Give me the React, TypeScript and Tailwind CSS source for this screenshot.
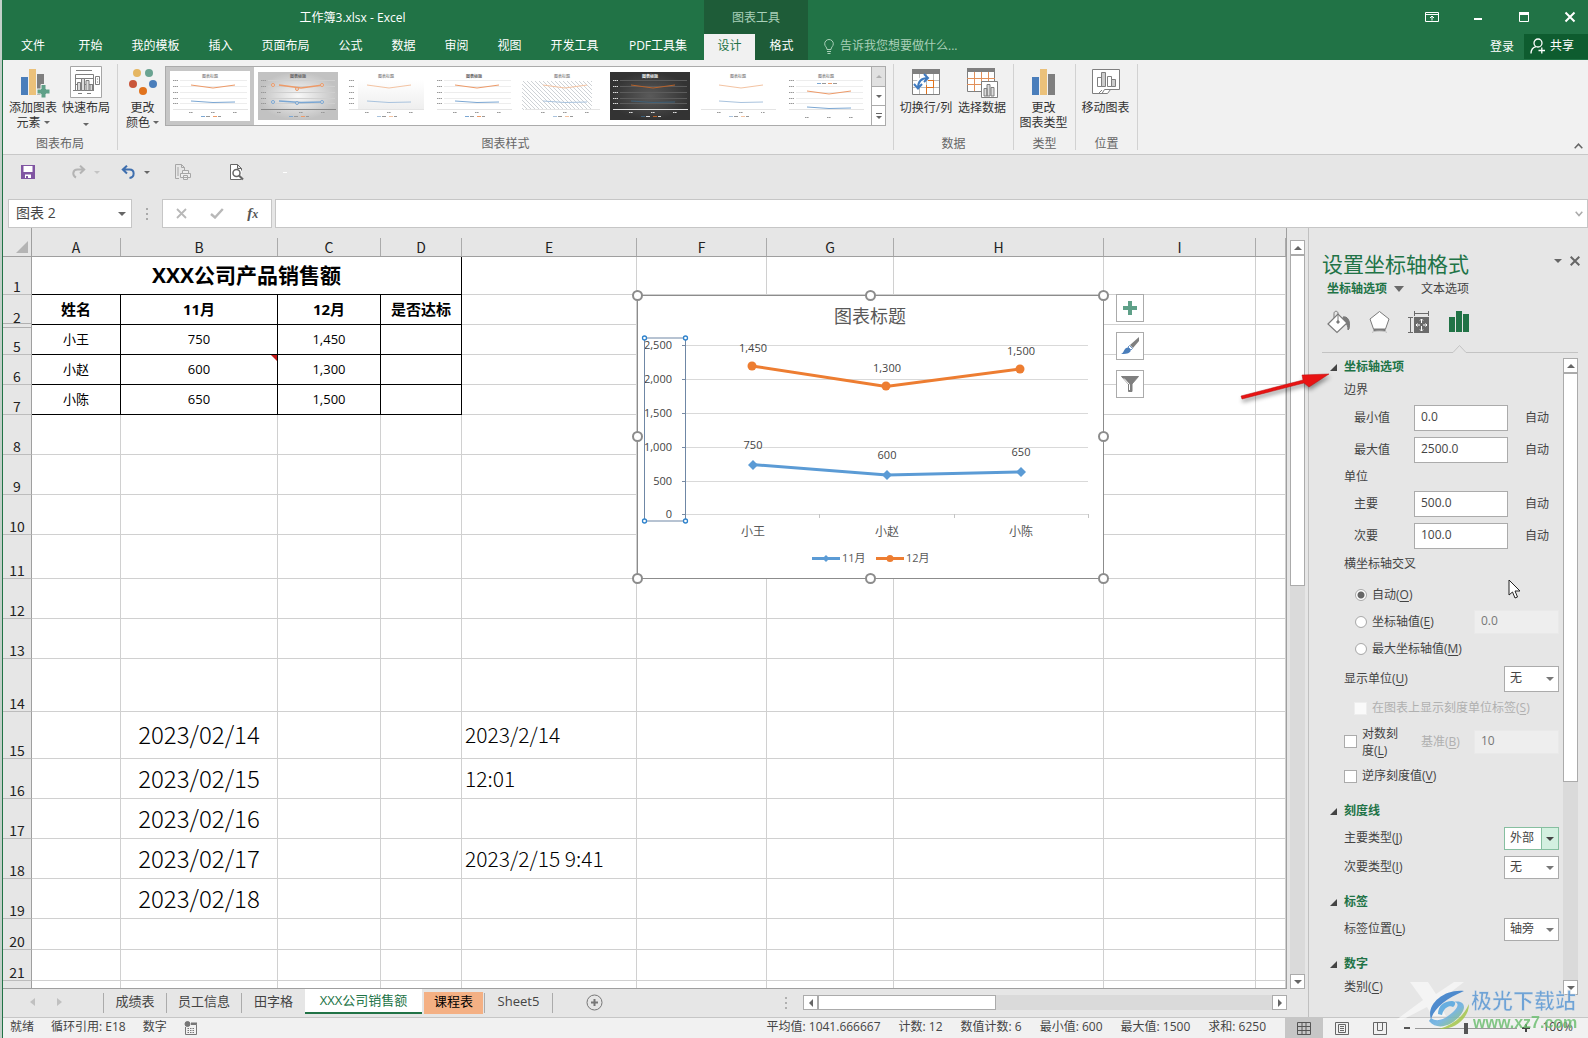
import type { ReactNode } from 'react'
import { clsx } from 'clsx'

const menuTabs = [
  { label: '文件', width: 'w-[62px]' },
  { label: '开始', width: 'w-[53px]' },
  { label: '我的模板', width: 'w-[77px]' },
  { label: '插入', width: 'w-[53px]' },
  { label: '页面布局', width: 'w-[77px]' },
  { label: '公式', width: 'w-[53px]' },
  { label: '数据', width: 'w-[53px]' },
  { label: '审阅', width: 'w-[53px]' },
  { label: '视图', width: 'w-[53px]' },
  { label: '开发工具', width: 'w-[77px]' },
  { label: 'PDF工具集', width: 'w-[90px]' },
]

const columns = [
  { name: 'A', width: 'w-[89px]' },
  { name: 'B', width: 'w-[157px]' },
  { name: 'C', width: 'w-[103px]' },
  { name: 'D', width: 'w-[81px]' },
  { name: 'E', width: 'w-[175px]' },
  { name: 'F', width: 'w-[130px]' },
  { name: 'G', width: 'w-[127px]' },
  { name: 'H', width: 'w-[210px]' },
  { name: 'I', width: 'w-[152px]' },
  { name: '', width: '' },
]

type Row = { n: string; height: string; cells?: string[]; kind?: 'title' | 'head' | 'data' | 'date' }

const rows: Row[] = [
  { n: '1', height: 'h-[38px]', cells: ['XXX公司产品销售额'], kind: 'title' },
  { n: '2', height: 'h-[30px]', cells: ['姓名', '11月', '12月', '是否达标'], kind: 'head' },
  { n: '5', height: 'h-[30px]', cells: ['小王', '750', '1,450', ''], kind: 'data' },
  { n: '6', height: 'h-[30px]', cells: ['小赵', '600', '1,300', ''], kind: 'data' },
  { n: '7', height: 'h-[30px]', cells: ['小陈', '650', '1,500', ''], kind: 'data' },
  { n: '8', height: 'h-[40px]' },
  { n: '9', height: 'h-[40px]' },
  { n: '10', height: 'h-[40px]' },
  { n: '11', height: 'h-[44px]' },
  { n: '12', height: 'h-[40px]' },
  { n: '13', height: 'h-[40px]' },
  { n: '14', height: 'h-[53px]' },
  { n: '15', height: 'h-[47px]', cells: ['', '2023/02/14', '', '', '2023/2/14'], kind: 'date' },
  { n: '16', height: 'h-[40px]', cells: ['', '2023/02/15', '', '', '12:01'], kind: 'date' },
  { n: '17', height: 'h-[40px]', cells: ['', '2023/02/16'], kind: 'date' },
  { n: '18', height: 'h-[40px]', cells: ['', '2023/02/17', '', '', '2023/2/15 9:41'], kind: 'date' },
  { n: '19', height: 'h-[40px]', cells: ['', '2023/02/18'], kind: 'date' },
  { n: '20', height: 'h-[31px]' },
  { n: '21', height: 'h-[31px]' },
  { n: '', height: 'h-[31px]' },
]

function Caret({ className = 'text-[#666]' }: { className?: string }) {
  return (
    <svg width="8" height="4" viewBox="0 0 8 4" className={clsx('shrink-0', className)}>
      <path d="M0 0h8L4 4z" fill="currentColor" />
    </svg>
  )
}

function LargeCaret() {
  return (
    <svg width="10" height="6" viewBox="0 0 10 6">
      <path d="M0 0h10L5 6z" fill="#6a6a6a" />
    </svg>
  )
}

function SmallCaret({ className = 'text-[#666]' }: { className?: string }) {
  return (
    <svg width="6" height="3" viewBox="0 0 6 3" className={clsx('inline-block shrink-0', className)}>
      <path d="M0 0h6L3 3z" fill="currentColor" />
    </svg>
  )
}

/* ---------- title bar and tabs ---------- */

function TitleBar() {
  return (
    <header className="bg-[#217346] text-white">
      <div className="flex h-[34px]">
        <div className="w-[699px] text-center leading-[36px]">工作簿3.xlsx - Excel</div>
        <div className="ml-[2px] w-[104px] bg-[#1e5c38] text-center leading-[36px] text-[#a9d0b8]">图表工具</div>
        <div className="ml-auto flex items-center gap-[32px] pr-[11px]">
          <button aria-label="功能区显示选项">
            <svg width="14" height="12" viewBox="0 0 14 12" fill="none" stroke="#fff">
              <path d="M.5 1.5h13v9H.5zM.5 3.5h13M7 9.5V5M5 7l2-2 2 2" />
            </svg>
          </button>
          <button aria-label="最小化">
            <svg width="14" height="12" viewBox="0 0 14 12"><path d="M3 7h8v2H3z" fill="#fff" /></svg>
          </button>
          <button aria-label="最大化">
            <svg width="14" height="12" viewBox="0 0 14 12">
              <path d="M2.5 1.5h9v9h-9z" fill="none" stroke="#fff" />
              <path d="M2 1h10v3H2z" fill="#fff" />
            </svg>
          </button>
          <button aria-label="关闭">
            <svg width="14" height="12" viewBox="0 0 14 12">
              <path d="M2.5 1.5l9 9M11.5 1.5l-9 9" stroke="#fff" strokeWidth="2" />
            </svg>
          </button>
        </div>
      </div>
      <nav className="flex h-[26px] items-stretch">
        {menuTabs.map((t, i) => (
          <button key={t.label} className={clsx(t.width, 'shrink-0 whitespace-nowrap pb-[2px] pr-[2px]', i === 0 && 'pr-1')}>
            {t.label}
          </button>
        ))}
        <button className="w-[51px] bg-[#f1f1f1] pb-[2px] text-[#217346]">设计</button>
        <button className="w-[53px] bg-[#1e5c38] pb-[2px]">格式</button>
        <button className="ml-4 flex items-center gap-[6px] pb-[2px] text-[#a9d0b8]">
          <svg width="10" height="15" viewBox="0 0 10 15" fill="none" stroke="currentColor">
            <path d="M3 10.5C3 8 .7 7.5.7 4.800a4.300 4.300 0 0 1 8.600 0C9.300 7.500 7 8 7 10.500zM3 12.500h4M3.500 14.500h3" />
          </svg>
          告诉我您想要做什么...
        </button>
        <button className="ml-auto pb-px pr-[10px]">登录</button>
        <button className="mb-px flex w-[64px] items-center gap-1 bg-[#0e5c2f] pb-[2px] pl-[6px]">
          <svg width="16" height="16" viewBox="0 0 16 16" fill="none" stroke="#fff" strokeWidth="1.300">
            <circle cx="8" cy="5" r="4" />
            <path d="M1 15.500c0-4 2-6 5-6.800M8.500 12.500h6.500M11.800 9.500v6" />
          </svg>
          共享
        </button>
      </nav>
    </header>
  )
}

/* ---------- ribbon ---------- */

function StyleThumb({ variant }: { variant: number }) {
  const dark = variant === 5
  const gray = variant === 1
  const low = variant === 7 ? 6 : 0
  const ink = dark ? '#ddd' : '#999'
  const pale = variant === 2 || variant === 4 || variant === 6
  const orange = dark ? '#b8632b' : pale ? '#f3c3a2' : '#ed9a68'
  const blue = dark ? '#3f6078' : pale ? '#a9c3de' : '#7ba7d3'
  return (
    <svg width="80" height="48" viewBox="0 0 80 48">
      <defs>
        <radialGradient id="thumbGray">
          <stop offset="0" stopColor="#f8f8f8" />
          <stop offset="1" stopColor="#c2c2c2" />
        </radialGradient>
        <radialGradient id="thumbDark">
          <stop offset="0" stopColor="#5a5a5a" />
          <stop offset="1" stopColor="#333" />
        </radialGradient>
        <linearGradient id="thumbFade" x1="0" y1="0" x2="0" y2="1">
          <stop offset="0" stopColor="#fff" />
          <stop offset="1" stopColor="#eee" />
        </linearGradient>
        <pattern id="thumbHatch" width="4" height="4" patternUnits="userSpaceOnUse">
          <path d="M0 0l4 4" stroke="#b9bec4" strokeWidth=".7" />
        </pattern>
      </defs>
      <rect width="80" height="48" fill={dark ? 'url(#thumbDark)' : gray ? 'url(#thumbGray)' : '#fff'} />
      {variant === 2 && <rect x="12" y="8" width="66" height="30" fill="url(#thumbFade)" />}
      {variant === 4 && <rect x="0" y="9" width="70" height="29" fill="url(#thumbHatch)" />}
      {[8, 14, 20, 26, 31, 37].map((y) => (
        <g key={y}>
          {variant !== 6 && variant !== 4 && <path d={`M3 ${y + .5}h5`} stroke={ink} strokeDasharray="1.500 .5" />}
          {variant !== 6 && variant !== 4 && variant !== 2 && (
            <path d={`M10 ${y + .5}h67`} stroke={dark ? '#5c5c5c' : gray ? '#cfcfcf' : '#ededed'} />
          )}
        </g>
      ))}
      <path d="M3 37.500h75" stroke={gray ? '#888' : '#e4e4e4'} />
      <path d={`M21 ${13 + low}L43 ${16 + low}L65 ${13 + low}`} fill="none" stroke={orange} strokeWidth={gray ? 1.300 : 1} />
      <path d={`M21 ${29 + low}L43 ${30.500 + low}L65 ${30 + low}`} fill="none" stroke={blue} strokeWidth={gray ? 1.300 : 1} />
      {gray &&
        [15, 39, 64].map((x, i) => (
          <g key={x} fill="#ddd">
            <circle cx={x} cy={i === 1 ? 17 : 13} r="1.500" stroke={orange} />
            <circle cx={x} cy={i === 1 ? 31 : 30} r="1.500" stroke={blue} />
          </g>
        ))}
      <text x="40" y="6" fontSize="4" textAnchor="middle" fill={dark ? '#eee' : '#666'} fontWeight={gray || dark || variant === 3 ? 700 : 400}>图表标题</text>
      {[21, 43, 65].map((x) => (
        <path key={x} d={`M${x - 2} ${variant === 7 ? 45.500 : 40.500}h4`} stroke={ink} strokeWidth="1.200" strokeDasharray="1.500 .4" />
      ))}
      <path d={variant === 7 ? 'M31 11.500h4' : 'M31 44.500h4'} stroke={blue} />
      <path d={variant === 7 ? 'M42 11.500h4' : 'M43 44.500h4'} stroke={orange} />
      <path d={variant === 7 ? 'M36 11.500h4M47 11.500h4' : 'M36 44.500h4M48 44.500h3'} stroke={ink} />
    </svg>
  )
}

function RibbonGroup({ label, className, children }: { label: string; className: string; children: ReactNode }) {
  return (
    <section className={clsx('flex shrink-0 flex-col border-r border-[#d2d2d2]', className)}>
      <div className="flex flex-1">{children}</div>
      <div className="text-center leading-[13px] text-[#666]">{label}</div>
    </section>
  )
}

function RibbonButton({ icon, children, className }: { icon: ReactNode; children: ReactNode; className: string }) {
  return (
    <button className={clsx('flex shrink-0 flex-col items-center whitespace-nowrap leading-[15px]', className)}>
      <span className="flex h-9 items-center">{icon}</span>
      {children}
    </button>
  )
}

function BarsIcon({ plus = false }: { plus?: boolean }) {
  return (
    <svg width="30" height="32" viewBox="0 0 30 32">
      <path d="M1 11h7v18H1z" fill="#4a7ebb" />
      <path d="M9 3h7v26H9z" fill="#ebc17a" />
      <path d="M17 8h7v21h-7z" fill="#7f7f7f" />
      {plus && <path d="M21 18.500h5v4.500h4v5h-4v4h-5v-4h-4v-5h4z" fill="#5fa088" stroke="#f1f1f1" />}
    </svg>
  )
}

function Ribbon() {
  return (
    <div className="flex h-[95px] border-b border-[#c8c8c8] bg-[#f1f1f1] py-1 text-[#333]">
      <RibbonGroup label="图表布局" className="w-[115px]">
        <RibbonButton className="w-[58px] pl-[2px]" icon={<span className="pl-[3px]"><BarsIcon plus /></span>}>
          <span>添加图表</span>
          <span>元素 <SmallCaret className="mb-[3px] text-[#666]" /></span>
        </RibbonButton>
        <RibbonButton
          className="w-[50px]"
          icon={
            <svg width="32" height="32" viewBox="0 0 32 32" fill="none" stroke="#7f7f7f">
              <path d="M.5.5h31v31H.5z" fill="#fff" stroke="#a6a6a6" />
              <path d="M6 4.500h16M5.500 8.500h18v16h-18zM3 24.500h21M25.500 10.500h4v8h-4zM27 13h1M27 16h1M8 27.500h4M17 27.500h4M5 12.500h18M5 18.500h18" />
              <path d="M7.500 16.500h3v8h-3zM11.500 12.500h3v12h-3zM16 14.500h3v10h-3zM20 18.500h2.500v6H20z" fill="#ddd" />
            </svg>
          }
        >
          <span>快速布局</span>
          <span className="pt-px"><SmallCaret /></span>
        </RibbonButton>
      </RibbonGroup>

      <RibbonGroup label="图表样式" className="w-[776px]">
        <RibbonButton
          className="w-[47px] pl-[2px]"
          icon={
            <svg width="30" height="32" viewBox="0 0 30 32">
              <circle cx="9" cy="7" r="4" fill="#e5b661" />
              <circle cx="21" cy="7" r="4" fill="#6aa391" />
              <circle cx="5" cy="18" r="4" fill="#c9553a" />
              <circle cx="25" cy="18" r="4" fill="#4a7ebb" />
              <circle cx="15" cy="25" r="4" fill="#e1731d" />
            </svg>
          }
        >
          <span>更改</span>
          <span>颜色 <SmallCaret className="mb-[3px] text-[#666]" /></span>
        </RibbonButton>
        <div className="mt-[2px] flex h-[60px] w-[721px] border border-[#ababab] bg-white">
          <div className="flex flex-1 items-center overflow-hidden">
            {[0, 1, 2, 3, 4, 5, 6, 7].map((v) => (
              <button
                key={v}
                aria-label={`样式 ${v + 1}`}
                className={clsx('flex h-full w-[88px] shrink-0 items-center justify-center', v === 0 && 'border-4 border-[#c6c6c6]')}
              >
                <StyleThumb variant={v} />
              </button>
            ))}
          </div>
          <div className="flex w-[14px] flex-col border-l border-[#ababab]">
            <button aria-label="向上" className="flex flex-1 items-center justify-center bg-[#e1e1e1]">
              <SmallCaret className="rotate-180 text-[#b0b0b0]" />
            </button>
            <button aria-label="向下" className="flex flex-1 items-center justify-center border-y border-[#ababab]">
              <SmallCaret />
            </button>
            <button aria-label="更多" className="flex flex-1 flex-col items-center justify-center gap-[2px]">
              <span className="h-px w-[6px] bg-[#666]" />
              <SmallCaret />
            </button>
          </div>
        </div>
      </RibbonGroup>

      <RibbonGroup label="数据" className="w-[120px]">
        <RibbonButton
          className="w-[62px] pl-[2px]"
          icon={
            <svg width="30" height="30" viewBox="0 0 30 30" fill="none">
              <path d="M1.500 3.500h27v24h-27z" fill="#fff" stroke="#7f7f7f" />
              <path d="M1 2h28v5H1z" fill="#7f7f7f" />
              <path d="M8.500 7v20M2 13.500h26M2 20.500h26M15.500 7v20M22.500 7v20" stroke="#bbb" />
              <path d="M15 20.500h7.500M22.500 13v8M17 13.500h5M15.500 18v9" stroke="#e1731d" />
              <path d="M7 21c0-7 3-10 10-10" stroke="#fff" strokeWidth="5" />
              <path d="M7 21c0-7 3-10 10-10M13 7l4 4-4 4M3 17l4 4.500 4-4.500" stroke="#3f7abf" strokeWidth="2" />
            </svg>
          }
        >
          切换行/列
        </RibbonButton>
        <RibbonButton
          className="w-[52px]"
          icon={
            <svg width="32" height="32" viewBox="0 0 32 32" fill="none">
              <path d="M1.500 2.500h27v23h-27z" fill="#fff" stroke="#7f7f7f" />
              <path d="M1 2h28v4H1z" fill="#7f7f7f" />
              <path d="M8.500 6v19M1 12.500h28M1 18.500h28M15.500 6v19M22.500 6v19" stroke="#e2905a" />
              <path d="M15.500 15.500h16v16h-16z" fill="#fff" stroke="#7f7f7f" />
              <path d="M18 22.500h3V30h-3zM21 18.500h3V30h-3zM25 21.500h3V30h-3z" fill="#ddd" stroke="#7f7f7f" />
            </svg>
          }
        >
          选择数据
        </RibbonButton>
      </RibbonGroup>

      <RibbonGroup label="类型" className="w-[62px]">
        <RibbonButton className="w-full pr-[2px]" icon={<span className="pl-[5px]"><BarsIcon /></span>}>
          <span>更改</span>
          <span>图表类型</span>
        </RibbonButton>
      </RibbonGroup>

      <RibbonGroup label="位置" className="w-[62px]">
        <RibbonButton
          className="w-full pr-[2px]"
          icon={
            <svg width="30" height="30" viewBox="0 0 30 30" fill="none" stroke="#7f7f7f">
              <path d="M1.500 2.500h27v20h-9l-3 4h-15z" fill="#fff" />
              <path d="M11 26.500l2.500-4h7M8 26l3-3" />
              <path d="M6.500 10.500h4v9h-4zM16.500 9.500h4v10h-4z" />
              <path d="M10.500 5.500h4v14h-4zM20.500 12.500h4v7h-4z" fill="#ccc" />
            </svg>
          }
        >
          移动图表
        </RibbonButton>
      </RibbonGroup>

      <button aria-label="折叠功能区" className="ml-auto self-end pb-px pr-[5px]">
        <svg width="9" height="6" viewBox="0 0 9 6" fill="none" stroke="#666" strokeWidth="1.500">
          <path d="M.7 5.200l3.800-4 3.800 4" />
        </svg>
      </button>
    </div>
  )
}

/* ---------- quick access and formula bar ---------- */

function QuickAccess() {
  return (
    <div className="flex h-[44px] items-center bg-[#e6e6e6] pb-[10px] pl-[18px]">
      <button aria-label="保存" className="w-[50px]">
        <svg width="14" height="14" viewBox="0 0 14 14">
          <path d="M0 0h14v14H0z" fill="#8055a2" />
          <path d="M2.500 1h9v6h-9zM4 9.500h6V13H4z" fill="#fff" />
          <path d="M5 11h2v2H5z" fill="#8055a2" />
        </svg>
      </button>
      <button aria-label="恢复" className="flex w-[50px] items-center gap-2">
        <svg width="15" height="14" viewBox="0 0 15 14" fill="none" stroke="#b4b4b4" strokeWidth="2">
          <path d="M13 4.500H6.500c-5 0-5.500 6-1.500 8M9 .7l4.200 3.800L9 8.500" />
        </svg>
        <SmallCaret className="text-[#c4c4c4]" />
      </button>
      <button aria-label="撤消" className="flex w-[54px] items-center gap-2">
        <svg width="15" height="14" viewBox="0 0 15 14" fill="none" stroke="#3f6fae" strokeWidth="2">
          <path d="M2 4.500h6.500c5.500 0 5.500 8 0 8.500M6 .7L1.800 4.500 6 8.500" />
        </svg>
        <SmallCaret />
      </button>
      <button aria-label="快速打印" className="w-[54px]">
        <svg width="16" height="16" viewBox="0 0 16 16" fill="none" stroke="#a6a6a6">
          <path d="M4 14.500H.5V.5h6l3 3V6M6.500.5v3h3M3 3v9" />
          <path d="M5.500 9.500h10v4h-10zM7.500 6.500h6v3h-6zM8.500 11.500h4v4h-4z" fill="#eee" />
        </svg>
      </button>
      <button aria-label="打印预览" className="w-[54px]">
        <svg width="15" height="17" viewBox="0 0 15 17" fill="none" stroke="#666">
          <path d="M12.500 15.500H1.500v-15h7l4 4v2M8.500.5v4h4" fill="#fff" />
          <circle cx="7.500" cy="9" r="3.500" strokeWidth="1.500" fill="#fff" />
          <path d="M10 11.500l4 4" strokeWidth="2.200" />
        </svg>
      </button>
      <span className="h-px w-1 bg-white" />
    </div>
  )
}

function FormulaBar() {
  return (
    <div className="flex h-[29px] bg-[#e6e6e6] pl-[5px] text-[14px]">
      <div className="relative flex w-[124px] items-center border border-[#c6c6c6] bg-white">
        <input aria-label="名称框" defaultValue="图表 2" className="w-full bg-transparent pl-[7px] pb-px text-[#444] outline-none" />
        <span className="absolute right-[5px]"><Caret /></span>
      </div>
      <div className="flex w-[30px] flex-col items-center justify-center gap-[3px]">
        <span className="size-[2px] bg-[#aaa]" />
        <span className="size-[2px] bg-[#aaa]" />
        <span className="size-[2px] bg-[#aaa]" />
      </div>
      <div className="flex w-[110px] items-center justify-around border border-[#c6c6c6] bg-white px-px">
        <button aria-label="取消">
          <svg width="11" height="11" viewBox="0 0 11 11" stroke="#b8b8b8" strokeWidth="1.800"><path d="M1 1l9 9M10 1l-9 9" /></svg>
        </button>
        <button aria-label="输入">
          <svg width="14" height="11" viewBox="0 0 14 11" fill="none" stroke="#b8b8b8" strokeWidth="2.400"><path d="M1 6l4 3.500L12.800 1" /></svg>
        </button>
        <button aria-label="插入函数" className="font-['Liberation_Serif',serif] text-[15px] font-bold italic text-[#555]">
          f<span className="text-[12px]">x</span>
        </button>
      </div>
      <div className="ml-[3px] flex flex-1 items-center border border-[#c6c6c6] bg-white pr-1">
        <input aria-label="编辑栏" className="flex-1 outline-none" />
        <svg width="8" height="6" viewBox="0 0 8 6" fill="none" stroke="#aaa" strokeWidth="1.500"><path d="M.7.7L4 4.500 7.300.7" /></svg>
      </div>
    </div>
  )
}

/* ---------- worksheet ---------- */

function SheetRow({ row }: { row: Row }) {
  const { kind, cells = [] } = row
  const boxed = kind === 'title' || kind === 'head' || kind === 'data'
  return (
    <tr className={row.height}>
      <th
        scope="row"
        className={clsx(
          "relative border-r border-[#9f9f9f] bg-[#e6e6e6] px-0 pb-px pt-0 text-center align-bottom font-['Noto_Sans_CJK_SC',sans-serif] text-[14px] font-normal leading-[14px] text-[#222]",
          row.n !== '2' && 'border-b border-b-[#bcbcbc]',
          row.n === '2' && 'pb-[3px]',
        )}
      >
        {row.n}
        {row.n === '2' && <span className="absolute -bottom-[3px] left-0 z-10 h-[5px] w-full border-y border-[#b0b0b0] bg-[#e6e6e6]" />}
      </th>
      {columns.map((col, i) => {
        if (kind === 'title' && i > 0 && i < 4) return null
        const inTable = boxed && i < 4
        return (
          <td
            key={i}
            colSpan={kind === 'title' && i === 0 ? 4 : undefined}
            className={clsx(
              'relative overflow-hidden whitespace-nowrap border-b border-r px-0 pb-[2px] pt-0 align-middle text-black',
              inTable ? 'border-black text-center' : 'border-[#d0d0d0]',
              kind === 'title' && 'text-[21px] font-bold leading-[28px]',
              kind === 'head' && 'text-[15px] font-bold leading-[20px]',
              kind === 'data' && 'text-[13px] leading-[18px]',
              kind === 'date' && "font-['Noto_Sans_CJK_SC',sans-serif] font-light",
              kind === 'date' && (i === 1 ? 'text-center text-[24px] leading-[28px]' : 'pl-[3px] text-[21px] leading-[28px]'),
            )}
          >
            {cells[i]}
            {row.n === '6' && i === 1 && (
              <svg width="6" height="6" viewBox="0 0 6 6" className="absolute right-0 top-0"><path d="M0 0h6v6z" fill="#c11b1b" /></svg>
            )}
          </td>
        )
      })}
    </tr>
  )
}

const axisLabels = [
  { y: 50, text: '2,500' },
  { y: 84, text: '2,000' },
  { y: 118, text: '1,500' },
  { y: 152, text: '1,000' },
  { y: 186, text: '500' },
  { y: 219, text: '0' },
]

const points = [
  { name: '小王', x: 116, nov: '750', ny: 170, dec: '1,450', dy: 72 },
  { name: '小赵', x: 250, nov: '600', ny: 180, dec: '1,300', dy: 92 },
  { name: '小陈', x: 384, nov: '650', ny: 177, dec: '1,500', dy: 75 },
]

function ChartObject() {
  return (
    <svg width="467" height="284" viewBox="0 0 467 284" className="block overflow-visible" fontSize="11" fill="#444">
      <path d="M.5.5h466v283H.5z" fill="#fff" stroke="#8c8c8c" />
      <text x="233" y="28" fontSize="18" textAnchor="middle" fill="#595959">图表标题</text>
      {axisLabels.map((a) => (
        <g key={a.y}>
          <path d={`M49 ${a.y + .5}h402`} stroke="#d9d9d9" />
          <path d={`M45 ${a.y + .5}h4`} stroke="#7a8ba3" />
          <text x="35" y={a.y + 4} textAnchor="end">{a.text}</text>
        </g>
      ))}
      <path d="M182.500 219v4M317.500 219v4M451.500 219v4" stroke="#c4c4c4" />
      <path d="M7.500 43h41v183h-41z" fill="none" stroke="#6f87a5" />
      {[[7.5, 43], [48.5, 43], [7.5, 226], [48.5, 226]].map(([x, y]) => (
        <circle key={`${x}-${y}`} cx={x} cy={y} r="2" fill="#fff" stroke="#2e82cc" strokeWidth="1.300" />
      ))}
      <path d="M115 71L249 91.500L383 74" fill="none" stroke="#ed7d31" strokeWidth="3" />
      <path d="M115 169.500L250 180L384 177" fill="none" stroke="#5b9bd5" strokeWidth="3" />
      {points.map((p) => (
        <g key={p.name} textAnchor="middle">
          <circle cx={p.x - 1} cy={p.dy - 1} r="4.500" fill="#ed7d31" />
          <path d={`M${p.x} ${p.ny - 5}l5 5-5 5-5-5z`} fill="#5b9bd5" />
          <text x={p.x} y={p.dy - 15}>{p.dec}</text>
          <text x={p.x} y={p.ny - 16}>{p.nov}</text>
          <text x={p.x} y="241" fontSize="12" fill="#595959">{p.name}</text>
        </g>
      ))}
      <path d="M175 263.500h28" stroke="#5b9bd5" strokeWidth="3" />
      <path d="M189 260l3.500 3.500-3.500 3.500-3.500-3.500z" fill="#5b9bd5" />
      <text x="205" y="267" fill="#595959">11月</text>
      <path d="M239 263.500h28" stroke="#ed7d31" strokeWidth="3" />
      <circle cx="253" cy="263.500" r="3.500" fill="#ed7d31" />
      <text x="269" y="267" fill="#595959">12月</text>
      {[.5, 233.5, 466.5].map((x) =>
        [.5, 141.5, 283.5].map(
          (y) => !(x === 233.5 && y === 141.5) && <circle key={`${x}-${y}`} cx={x} cy={y} r="4.500" fill="#fff" stroke="#8c8c8c" strokeWidth="2" />,
        ),
      )}
    </svg>
  )
}

function ChartButtons() {
  const box = 'flex size-[28px] items-center justify-center border border-[#ababab] bg-white'
  return (
    <div className="flex flex-col gap-[10px]">
      <button aria-label="图表元素" className={box}>
        <svg width="14" height="14" viewBox="0 0 14 14"><path d="M5 0h4v5h5v4H9v5H5V9H0V5h5z" fill="#5fa088" /></svg>
      </button>
      <button aria-label="图表样式" className={box}>
        <svg width="18" height="18" viewBox="0 0 18 18">
          <path d="M18 0v4l-6 7-3-3z" fill="#7f7f7f" />
          <path d="M0 17c3-1 3-6 6.500-6.500 3-.3 4 3 2.500 4.500-2 2-6 2-9 2z" fill="#4a7ebb" />
          <path d="M8.500 8.500l3 3-1.500 1.500-3-3z" fill="#fff" stroke="#4a7ebb" strokeWidth=".8" />
        </svg>
      </button>
      <button aria-label="图表筛选器" className={box}>
        <svg width="18" height="16" viewBox="0 0 18 16">
          <path d="M.5.5h17L11 8v7.500H7.500V8z" fill="#7f7f7f" stroke="#7f7f7f" />
          <path d="M3 2.500L8.500 8.500V14" fill="none" stroke="#fff" />
        </svg>
      </button>
    </div>
  )
}

function Worksheet() {
  return (
    <div className="relative min-h-0 flex-1 overflow-hidden border-b border-r border-[#9f9f9f] bg-white">
      <table className="w-full table-fixed border-separate border-spacing-0">
        <thead>
          <tr className="h-[29px] bg-[#e6e6e6]">
            <th className="w-[29px] border-b border-r border-[#9f9f9f] p-0 align-bottom">
              <svg width="12" height="12" viewBox="0 0 12 12" className="mb-[3px] ml-auto mr-[3px]"><path d="M12 0v12H0z" fill="#b4b4b4" /></svg>
            </th>
            {columns.map((c, i) => (
              <th
                key={i}
                scope="col"
                className={clsx(
                  "border-b border-[#9f9f9f] p-0 align-bottom font-['Noto_Sans_CJK_SC',sans-serif] text-[14px] font-normal leading-[18px] text-[#222]",
                  c.width,
                )}
              >
                <div className="h-[18px] border-r border-[#ababab] pt-px leading-[17px]">{c.name}</div>
              </th>
            ))}
          </tr>
        </thead>
        <tbody>
          {rows.map((r, i) => <SheetRow key={i} row={r} />)}
        </tbody>
      </table>
      <div className="absolute left-[634px] top-[67px]"><ChartObject /></div>
      <div className="absolute left-[1113px] top-[66px]"><ChartButtons /></div>
    </div>
  )
}

const scrollButton = 'flex shrink-0 items-center justify-center border border-[#ababab] bg-white'

function SheetTabs() {
  return (
    <div className="flex h-[28px] items-start bg-[#e6e6e6] text-[13px] text-[#444]">
      <div className="mt-[9px] flex w-[100px] gap-[22px] pl-[27px]">
        <svg width="5" height="8" viewBox="0 0 5 8"><path d="M5 0v8L0 4z" fill="#c0c0c0" /></svg>
        <svg width="5" height="8" viewBox="0 0 5 8"><path d="M0 0v8l5-4z" fill="#c0c0c0" /></svg>
      </div>
      <button className="mt-1 h-5 w-[64px] border-x border-[#ababab] pb-1 leading-4">成绩表</button>
      <button className="mt-1 h-5 w-[75px] border-r border-[#ababab] pb-1 leading-4">员工信息</button>
      <button className="mt-1 h-5 w-[63px] pb-1 leading-4">田字格</button>
      <button className="h-[25px] w-[117px] border-b-2 border-[#217346] bg-white pb-[2px] text-[#217346]">XXX公司销售额</button>
      <button className="ml-[2px] mr-px mt-[3px] h-[22px] w-[59px] bg-[#f4b084] pb-1 leading-[18px] text-black">课程表</button>
      <button className="mt-1 h-5 w-[69px] border-x border-[#ababab] pb-1 leading-4">Sheet5</button>
      <button aria-label="新工作表" className="ml-[33px] mt-[5px]">
        <svg width="17" height="17" viewBox="0 0 17 17" fill="none" stroke="#777">
          <circle cx="8.500" cy="8.500" r="7.500" />
          <path d="M8.500 5v7M5 8.500h7" strokeWidth="2" />
        </svg>
      </button>
      <div className="ml-auto mr-[21px] mt-[6px] flex h-[15px] w-[502px]">
        <div className="flex w-[18px] flex-col gap-[3px] pt-[2px]">
          <span className="size-[2px] bg-[#b0b0b0]" />
          <span className="size-[2px] bg-[#b0b0b0]" />
          <span className="size-[2px] bg-[#b0b0b0]" />
        </div>
        <button aria-label="向左滚动" className={clsx(scrollButton, 'w-[15px]')}>
          <svg width="4" height="8" viewBox="0 0 4 8"><path d="M4 0v8L0 4z" fill="#666" /></svg>
        </button>
        <div className="flex flex-1 bg-[#dadada]"><div className="w-[178px] border border-[#ababab] bg-white" /></div>
        <button aria-label="向右滚动" className={clsx(scrollButton, 'w-[15px]')}>
          <svg width="4" height="8" viewBox="0 0 4 8"><path d="M0 0v8l4-4z" fill="#666" /></svg>
        </button>
      </div>
    </div>
  )
}

/* ---------- task pane ---------- */

function SectionTitle({ children, className }: { children: ReactNode; className?: string }) {
  return (
    <h3 className={clsx('flex h-[26px] items-center gap-[7px] pl-[21px] font-bold text-[#217346]', className)}>
      <svg width="7" height="7" viewBox="0 0 7 7"><path d="M7 0v7H0z" fill="#444" /></svg>
      {children}
    </h3>
  )
}

function AxisField({ id, label, value }: { id: string; label: string; value: string }) {
  return (
    <div className="flex h-8 items-center pl-[45px]">
      <label htmlFor={id} className="w-[60px]">{label}</label>
      <input id={id} defaultValue={value} className="h-[26px] w-[94px] border border-[#ababab] bg-white pl-[6px] pb-[3px] outline-none" />
      <span className="pl-[17px] pb-px">自动</span>
    </div>
  )
}

function Key({ k }: { k: string }) {
  return <>(<u className="underline-offset-2">{k}</u>)</>
}

function AxisSelect({ id, label, k, value, tall = false, hot = false }: { id: string; label: string; k: string; value: string; tall?: boolean; hot?: boolean }) {
  return (
    <div className={clsx('flex items-center justify-between pl-[35px]', tall ? 'h-[34px]' : 'h-[29px]')}>
      <label htmlFor={id} className="pb-px">{label}<Key k={k} /></label>
      <div className={clsx('relative flex w-[55px] items-center border bg-white', tall ? 'h-[26px]' : 'h-[23px]', hot ? 'border-[#86bfa0]' : 'border-[#ababab]')}>
        <select id={id} defaultValue={value} className="h-full w-full appearance-none pb-[2px] pl-[5px] outline-none">
          <option>{value}</option>
        </select>
        <span
          className={clsx(
            'pointer-events-none absolute right-0 flex h-full w-[17px] items-center justify-center',
            hot && 'border-l border-[#86bfa0] bg-[#d3f0e0]',
          )}
        >
          <Caret className={hot ? 'text-[#444]' : 'text-[#777]'} />
        </span>
      </div>
    </div>
  )
}

function CrossRadio({ label, k, checked = false, children }: { label: string; k: string; checked?: boolean; children?: ReactNode }) {
  return (
    <div className="flex h-[27px] items-center justify-between pl-[46px]">
      <label className="flex items-center gap-[5px]">
        <input
          type="radio"
          name="cross"
          defaultChecked={checked}
          className="size-3 appearance-none rounded-full border border-[#ababab] bg-white bg-clip-padding checked:bg-[radial-gradient(#666_0_3px,#fff_4px)]"
        />
        <span>{label}<Key k={k} /></span>
      </label>
      {children}
    </div>
  )
}

const checkbox = 'shrink-0 size-[13px] appearance-none border border-[#ababab] bg-white checked:bg-[#666]'
const disabledInput = 'h-6 w-[85px] border border-[#e9e9e9] bg-[#eee] pb-[2px] pl-[6px] text-[#777]'

function FormatPane() {
  return (
    <aside className="flex w-[280px] shrink-0 flex-col border-l border-[#c0c0c0] bg-[#e6e6e6] pt-[21px] text-[#444]">
      <div className="flex h-[30px] items-center pl-[13px] pr-2">
        <h2 className="flex-1 whitespace-nowrap text-[21px] leading-[30px] text-[#217346]">设置坐标轴格式</h2>
        <div className="flex items-center gap-2 pb-[7px]">
          <button aria-label="任务窗格选项"><Caret /></button>
          <button aria-label="关闭窗格">
            <svg width="10" height="10" viewBox="0 0 10 10" stroke="#666" strokeWidth="2"><path d="M.7.7l8.600 8.600M9.300.7L.7 9.300" /></svg>
          </button>
        </div>
      </div>
      <div className="mt-px flex h-[18px] items-center pl-[18px]">
        <button className="font-bold text-[#217346]">坐标轴选项</button>
        <span className="pl-[7px] pr-[17px]"><LargeCaret /></span>
        <button>文本选项</button>
      </div>
      <div className="mt-[9px] flex h-[30px] items-center gap-[16px] pl-[18px]">
        <button aria-label="填充与线条">
          <svg width="24" height="24" viewBox="0 0 24 24" fill="none" stroke="#7a7a7a">
            <path d="M16 7c4-1 8 3 6 12l-1 1c0-4-1-6-4-9z" fill="#7a7a7a" />
            <path d="M1 14L11 4l9 9-10 9.500z" fill="#fff" strokeWidth="1.200" />
            <path d="M7 8V3.500C7 .5 11 .5 11 3.500V11" />
            <circle cx="11" cy="12" r="1.200" fill="#7a7a7a" />
          </svg>
        </button>
        <button aria-label="效果">
          <svg width="24" height="24" viewBox="0 0 24 24" fill="none" stroke="#7a7a7a">
            <path d="M12.500 1.500L22 9l-3.500 10h-12L3 9z" fill="#fff" />
            <path d="M6.500 20h12" strokeWidth="2" />
            <path d="M5 22.500c2-2 13-2 15 0" stroke="#bbb" />
          </svg>
        </button>
        <button aria-label="大小与属性">
          <svg width="24" height="24" viewBox="0 0 24 24" fill="none" stroke="#6a6a6a">
            <path d="M7 7h15v16H7z" fill="#6a6a6a" stroke="none" />
            <path d="M7.500 1v5M21.500 1v5M8 3.500h13M1 7.500h5M1 22.500h5M3.500 8v14" />
            <path d="M14.500 9v4M14.500 16v5M9 15h4M16 15h4M13 10.500l1.500-1.500 1.500 1.500M13 19.500l1.500 1.500 1.500-1.500M10.500 13.500L9 15l1.500 1.500M18.500 13.500L20 15l-1.500 1.500" stroke="#fff" />
          </svg>
        </button>
        <button aria-label="坐标轴选项">
          <svg width="24" height="24" viewBox="0 0 24 24"><path d="M2 7h6v15H2zM9 1h6v21H9zM16 4h6v18h-6z" fill="#217346" /></svg>
        </button>
      </div>
      <div className="flex h-[16px] shrink-0 items-end pl-[13px] pr-[10px]">
        <span className="w-[130px] border-b border-[#c3c3c3]" />
        <svg width="15" height="9" viewBox="0 0 15 9" fill="none" stroke="#c3c3c3"><path d="M0 8.500h1l6.500-7 6.500 7h1" /></svg>
        <span className="flex-1 border-b border-[#c3c3c3]" />
      </div>
      <div className="flex min-h-0 flex-1 pr-[10px]">
        <div className="flex-1 overflow-hidden pr-1 pt-px">
          <SectionTitle>坐标轴选项</SectionTitle>
          <h4 className="h-[22px] pl-[35px] leading-[20px]">边界</h4>
          <AxisField id="min" label="最小值" value="0.0" />
          <AxisField id="max" label="最大值" value="2500.0" />
          <h4 className="h-[22px] pl-[35px] leading-[22px]">单位</h4>
          <AxisField id="major" label="主要" value="500.0" />
          <AxisField id="minor" label="次要" value="100.0" />
          <h4 className="h-[29px] pl-[35px] leading-[24px]">横坐标轴交叉</h4>
          <CrossRadio label="自动" k="O" checked />
          <CrossRadio label="坐标轴值" k="E">
            <input aria-label="坐标轴值" disabled defaultValue="0.0" className={disabledInput} />
          </CrossRadio>
          <CrossRadio label="最大坐标轴值" k="M" />
          <AxisSelect id="unit" label="显示单位" k="U" value="无" tall />
          <label className="flex h-6 items-center gap-[5px] pl-[45px] text-[#b0b0b0]">
            <input type="checkbox" disabled className="size-[13px] appearance-none border border-[#eee] bg-[#fafafa]" />
            <span>在图表上显示刻度单位标签<Key k="S" /></span>
          </label>
          <div className="flex h-[43px] items-center pl-[35px]">
            <label className="flex w-[77px] items-center gap-[5px]">
              <input type="checkbox" className={checkbox} />
              <span className="w-[40px] leading-[17px]">对数刻度<Key k="L" /></span>
            </label>
            <label htmlFor="base" className="flex-1 text-[#b0b0b0]">基准<Key k="B" /></label>
            <input id="base" disabled defaultValue="10" className={disabledInput} />
          </div>
          <label className="flex h-[26px] items-center gap-[5px] pl-[35px]">
            <input type="checkbox" className={checkbox} />
            <span>逆序刻度值<Key k="V" /></span>
          </label>
          <SectionTitle className="mt-[9px]">刻度线</SectionTitle>
          <AxisSelect id="majorType" label="主要类型" k="J" value="外部" hot />
          <AxisSelect id="minorType" label="次要类型" k="I" value="无" />
          <SectionTitle className="mt-[7px]">标签</SectionTitle>
          <AxisSelect id="labelPos" label="标签位置" k="L" value="轴旁" />
          <SectionTitle className="mt-[7px]">数字</SectionTitle>
          <div className="pl-[35px] leading-[20px]">类别<Key k="C" /></div>
        </div>
        <div className="mb-[22px] mt-[5px] flex w-[15px] flex-col bg-[#dadada]">
          <button aria-label="向上滚动" className={clsx(scrollButton, 'h-[15px]')}><Caret className="rotate-180 text-[#666]" /></button>
          <div className="h-[409px] border border-[#ababab] bg-white" />
          <button aria-label="向下滚动" className={clsx(scrollButton, 'mt-auto h-[15px]')}><Caret /></button>
        </div>
      </div>
    </aside>
  )
}

/* ---------- status bar ---------- */

function StatusBar() {
  return (
    <footer className="flex h-[21px] shrink-0 items-stretch whitespace-nowrap border-t border-[#c6c6c6] bg-[#f1f1f1] leading-[18px] text-[#444]">
      <div className="flex gap-[17px] pl-[7px]">
        <span>就绪</span>
        <span>循环引用: E18</span>
        <span>数字</span>
        <svg width="14" height="14" viewBox="0 0 14 14" className="mt-[3px]" fill="none" stroke="#777">
          <path d="M1.500 6v7.500h11v-10H7" />
          <path d="M3.500 7.500h7M3.500 9.500h7M3.500 11.500h7" strokeDasharray="1.500 1" />
          <path d="M7 2.500h6" strokeWidth="2" />
          <circle cx="3.500" cy="3" r="2.500" fill="#777" />
        </svg>
      </div>
      <div className="ml-auto flex gap-[18px] pr-[19px]">
        <span>平均值: 1041.666667</span>
        <span>计数: 12</span>
        <span>数值计数: 6</span>
        <span>最小值: 600</span>
        <span>最大值: 1500</span>
        <span>求和: 6250</span>
      </div>
      <button aria-label="普通" className="flex w-[38px] items-center justify-center bg-[#c6c6c6]">
        <svg width="14" height="13" viewBox="0 0 14 13" fill="none" stroke="#555"><path d="M.5.5h13v12H.5zM5 0v13M9 0v13M0 4.500h14M0 8.500h14" /></svg>
      </button>
      <button aria-label="页面布局" className="flex w-[38px] items-center justify-center">
        <svg width="14" height="13" viewBox="0 0 14 13" fill="none" stroke="#666"><path d="M.5.5h13v12H.5zM3.500 2.500h7v8h-7zM5 4.500h4M5 6.500h4M5 8.500h4" /></svg>
      </button>
      <button aria-label="分页预览" className="flex w-[38px] items-center justify-center">
        <svg width="14" height="13" viewBox="0 0 14 13" fill="none" stroke="#666"><path d="M.5.5h13v12H.5zM4.500 0v8.500H9M9.500 0v8.500" /></svg>
      </button>
      <div className="flex w-[189px] items-center pl-[5px]">
        <button aria-label="缩小" className="h-[2px] w-[6px] bg-[#555]" />
        <div className="mx-[5px] flex h-full w-[102px] items-center justify-center">
          <span className="h-px flex-1 bg-[#999]" />
          <span className="h-[11px] w-1 bg-[#555]" />
          <span className="h-px flex-1 bg-[#999]" />
        </div>
        <button aria-label="放大">
          <svg width="8" height="8" viewBox="0 0 8 8" stroke="#444" strokeWidth="2"><path d="M4 0v8M0 4h8" /></svg>
        </button>
        <span className="ml-auto pb-[2px] pr-[15px]">100%</span>
      </div>
    </footer>
  )
}

/* ---------- things floating over the window ---------- */

function RedArrow() {
  return (
    <svg width="92" height="30" viewBox="0 0 92 30" className="pointer-events-none absolute left-[1240px] top-[371px] drop-shadow-[1px_3px_2px_rgba(0,0,0,0.4)]">
      <path d="M1 25L63 9l-1-5 27-1-20 13-5-4L2 28z" fill="#e81313" stroke="#b80f0f" strokeWidth=".5" />
    </svg>
  )
}

function Pointer() {
  return (
    <svg width="13" height="20" viewBox="0 0 13 20" className="pointer-events-none absolute left-[1508px] top-[579px]">
      <path d="M1 1v15l3.500-3 2.500 6 2.500-1L7 12h5z" fill="#fff" stroke="#222" />
    </svg>
  )
}

function Watermark() {
  return (
    <svg width="192" height="58" viewBox="0 0 192 58" className="pointer-events-none absolute bottom-0 right-0">
      <defs>
        <linearGradient id="swirl" x1="0" y1="0" x2="1" y2="1">
          <stop offset="0" stopColor="#3c8fd6" />
          <stop offset=".55" stopColor="#67aee0" />
          <stop offset="1" stopColor="#8fc24a" />
        </linearGradient>
      </defs>
      <path d="M14 2h18l8 12L58 2h10L42 22l8 14H36l-5-9L6 40H0l27-20z" fill="#fff" opacity=".55" />
      <path d="M68 11C46 9 30 26 35 39c4-12 16-21 33-28z" fill="#3c7fca" opacity=".9" />
      <path d="M35 38c8 6 18-2 24-8 4-4 3-8-1-8 8-2 12 3 9 9-6 12-24 22-34 10z" fill="url(#swirl)" opacity=".85" />
      <path d="M42 34c0-8 6-13 14-13 4 0 4 4 1 6-3-2-9 0-11 8z" fill="#67aee0" />
      <path d="M73 24c0 14-14 26-30 25 14-4 24-12 30-25z" fill="#a3c64a" opacity=".85" />
      <text x="75" y="28" fontSize="21" fontWeight="700" fill="#5b98d4" stroke="#e6e6e6" strokeWidth=".6" opacity=".85">极光下载站</text>
      <text x="77" y="48" fontSize="16" fontWeight="700" fontFamily="Liberation Sans, sans-serif" fill="#6fbf73" opacity=".85">www.xz7.com</text>
    </svg>
  )
}

export default function App() {
  return (
    <div className="relative flex h-screen overflow-hidden bg-[#e6e6e6] font-['Open_Sans','Noto_Sans_CJK_SC',sans-serif] text-[12px] leading-[18px]">
      <div className="w-[3px] shrink-0 border-r border-[#217346] bg-[#c3cfc9]" />
      <div className="flex min-w-0 flex-1 flex-col">
        <TitleBar />
        <Ribbon />
        <QuickAccess />
        <FormulaBar />
        <main className="flex min-h-0 flex-1">
          <div className="flex min-w-0 flex-1 flex-col">
            <div className="flex min-h-0 flex-1">
              <Worksheet />
              <div className="flex w-[21px] shrink-0 flex-col px-[3px] pt-[12px]">
                <button aria-label="向上滚动" className={clsx(scrollButton, 'h-[15px]')}><Caret className="rotate-180 text-[#666]" /></button>
                <div className="flex-1 bg-[#dadada]"><div className="h-[331px] border border-[#ababab] bg-white" /></div>
                <button aria-label="向下滚动" className={clsx(scrollButton, 'h-[15px]')}><Caret /></button>
              </div>
            </div>
            <SheetTabs />
          </div>
          <FormatPane />
        </main>
        <StatusBar />
      </div>
      <RedArrow />
      <Pointer />
      <Watermark />
    </div>
  )
}
